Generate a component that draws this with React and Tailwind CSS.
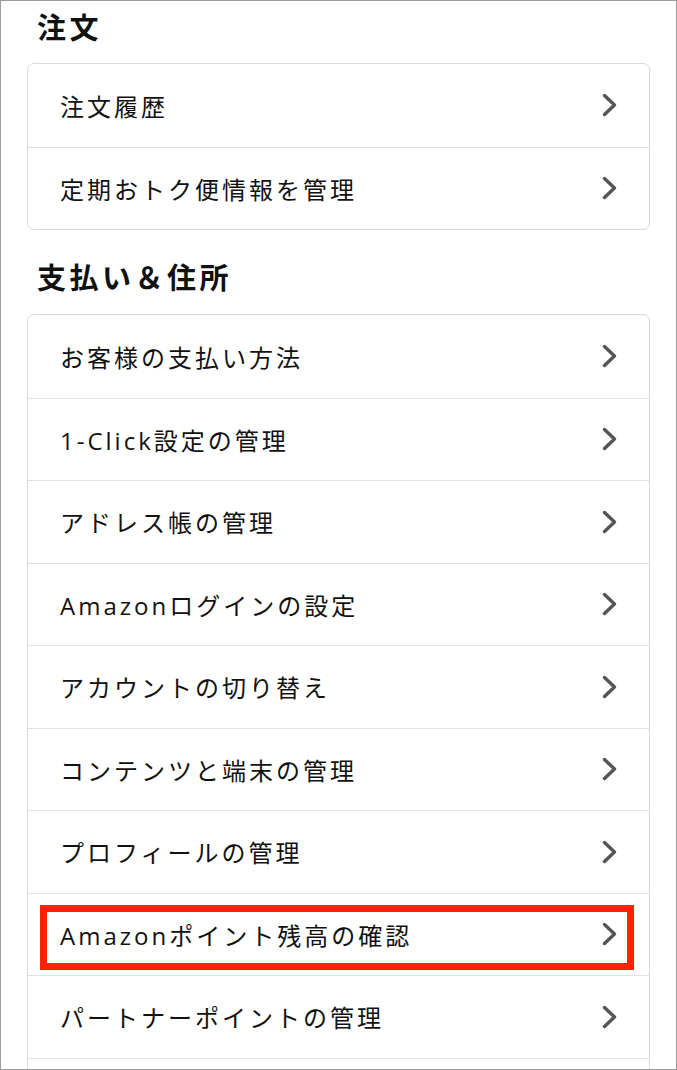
import React from 'react';

const sections = [
  {
    title: '注文',
    items: [{ label: '注文履歴' }, { label: '定期おトク便情報を管理' }],
  },
  {
    title: '支払い＆住所',
    items: [
      { label: 'お客様の支払い方法' },
      { label: '1-Click設定の管理' },
      { label: 'アドレス帳の管理' },
      { label: 'Amazonログインの設定' },
      { label: 'アカウントの切り替え' },
      { label: 'コンテンツと端末の管理' },
      { label: 'プロフィールの管理' },
      { label: 'Amazonポイント残高の確認', marked: true },
      { label: 'パートナーポイントの管理' },
      { label: '' },
    ],
  },
];

const Chevron = () => (
  <svg width="15" height="24" viewBox="0 0 15 24" fill="none" className="shrink-0">
    <polyline
      points="2.5,2.5 12.5,12 2.5,21.5"
      stroke="#555"
      strokeWidth="3.4"
      strokeLinecap="round"
      strokeLinejoin="round"
    />
  </svg>
);

const Row = ({ item, first }) => (
  <div
    className={`relative flex items-center justify-between h-[82.5px] pl-[32px] pr-[32px] ${
      first ? '' : 'border-t border-[#e2e2e2]'
    }`}
  >
    <span className="text-[24px] tracking-[3px] text-[#111] pt-[3px]">{item.label}</span>
    {item.label && <Chevron />}
    {item.marked && (
      <div className="absolute left-[12px] right-[15px] top-[11px] bottom-[5px] border-[7px] border-[#ff2200]" />
    )}
  </div>
);

export default function App() {
  return (
    <div className="w-[677px] h-[1070px] overflow-hidden bg-white border border-[#9b9b9b] font-['Open_Sans','Noto_Sans_CJK_JP',sans-serif]">
      <div className="px-[26px]">
        {sections.map((section, i) => (
          <div key={i}>
            <h2
              className={`pl-[10px] text-[29px] leading-[40px] font-bold tracking-[3.5px] text-[#111] ${
                i === 0 ? 'mt-[7px] mb-[15px]' : 'mt-[28px] mb-[16px]'
              }`}
            >
              {section.title}
            </h2>
            <div className="rounded-[7px] border border-[#d9d9d9] bg-white">
              {section.items.map((item, idx) => (
                <Row key={idx} item={item} first={idx === 0} />
              ))}
            </div>
          </div>
        ))}
      </div>
    </div>
  );
}
